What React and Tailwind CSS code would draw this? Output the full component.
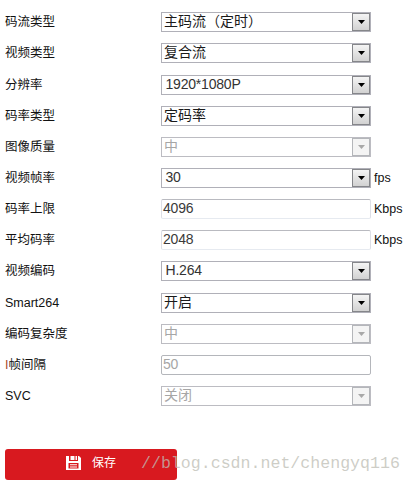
import clsx from 'clsx';

const fields = [
  { label: '码流类型', type: 'select', value: '主码流（定时）' },
  { label: '视频类型', type: 'select', value: '复合流' },
  { label: '分辨率', type: 'select', value: '1920*1080P', latin: true },
  { label: '码率类型', type: 'select', value: '定码率' },
  { label: '图像质量', type: 'select', value: '中', disabled: true },
  { label: '视频帧率', type: 'select', value: '30', latin: true, unit: 'fps' },
  { label: '码率上限', type: 'input', value: '4096', unit: 'Kbps' },
  { label: '平均码率', type: 'input', value: '2048', unit: 'Kbps' },
  { label: '视频编码', type: 'select', value: 'H.264', latin: true },
  { label: 'Smart264', type: 'select', value: '开启' },
  { label: '编码复杂度', type: 'select', value: '中', disabled: true },
  { label: 'I帧间隔', type: 'input', value: '50', disabled: true },
  { label: 'SVC', type: 'select', value: '关闭', disabled: true },
];

const SelectBox = ({ value, latin, disabled }) => (
  <div
    className={clsx(
      'flex h-5 w-[210px] border bg-white',
      disabled ? 'border-[#bcbcc2]' : 'border-[#b0b0b8]'
    )}
  >
    <span
      className={clsx(
        'flex-1 whitespace-nowrap text-[14px]',
        latin ? 'pl-[3.5px] leading-4 tracking-[-0.2px]' : 'pl-[2px] leading-[17px]',
        disabled ? 'text-[#a6a6a6]' : latin ? 'text-[#333]' : 'text-[#1a1a1a]'
      )}
    >
      {value}
    </span>
    <span
      className={clsx(
        'flex w-[18px] items-center justify-center border',
        disabled
          ? 'border-[#b4b6ba] bg-[#f4f4f4]'
          : 'border-[#85868a] bg-linear-to-b from-[#f4f4f4] to-[#d2d2d2]'
      )}
    >
      <svg width="7" height="4" viewBox="0 0 7 4" className={disabled ? 'text-[#a8a8a8]' : 'text-black'}>
        <path d="M0 0h7L3.5 4z" fill="currentColor" />
      </svg>
    </span>
  </div>
);

const InputBox = ({ value, disabled }) => (
  <div
    className={clsx(
      'h-5 w-[210px] rounded-[2px] border bg-white pl-px text-[14px] leading-[17px] tracking-[-0.2px]',
      disabled
        ? 'border-[#b4b6bb] text-[#a6a6a6]'
        : 'border-x-[#dddfe6] border-t-[#b9bac0] border-b-[#e6eaf0] text-[#3a3a3a]'
    )}
  >
    {value}
  </div>
);

const SaveIcon = () => (
  <svg width="15" height="14" viewBox="0 0 15 14" fill="none">
    <path fill="#fff" fillRule="evenodd" d="M0 0h3v5h9V0h1l2 2v12H0zM2.5 7v5.5h10V7z" />
    <path fill="#fff" d="M4.5 0h4v4h-4zM9.5 0h1.5v4H9.5zM4 8.2h7v1H4zM4 10.4h7v1H4z" />
  </svg>
);

const App = () => {
  return (
    <div className="h-[484px] w-[412px] overflow-hidden bg-white pt-[6.66px] pl-[5px] font-['Liberation_Sans','Noto_Sans_CJK_SC',sans-serif] text-[12.5px] text-[#111]">
      {fields.map((field) => (
        <div key={field.label} className="flex h-[31.17px] items-center">
          <span className="w-[156px] shrink-0 whitespace-nowrap leading-5">
            {field.label.startsWith('I') ? (
              <>
                <span className="text-[#a8482a]">I</span>
                {field.label.slice(1)}
              </>
            ) : (
              field.label
            )}
          </span>
          {field.type === 'select' ? <SelectBox {...field} /> : <InputBox {...field} />}
          {field.unit && <span className="ml-[3px] leading-5">{field.unit}</span>}
        </div>
      ))}

      {/* Save button, with the blog watermark running over its right end */}
      <div className="relative mt-[37.1px]">
        <button className="flex h-[31px] w-[172px] items-center rounded-[3px] bg-[#d8191f] pb-[3px] pl-[61px] text-[12px] text-white">
          <SaveIcon />
          <span className="ml-[11px]">保存</span>
        </button>
        <span className="absolute top-[5px] left-[136px] whitespace-nowrap font-['Liberation_Mono',monospace] text-[16.6px] leading-5 text-[#bdbdb4]/75">
          //blog.csdn.net/chengyq116
        </span>
      </div>
    </div>
  );
};

export default App;
